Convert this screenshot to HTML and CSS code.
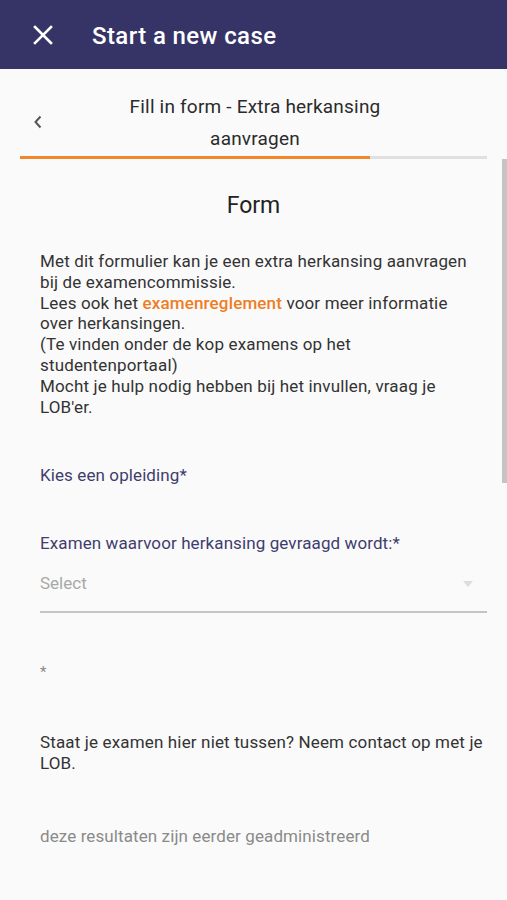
FILE: index.html
```html
<!DOCTYPE html>
<html>
<head>
<meta charset="utf-8">
<link rel="stylesheet" href="styles.css">
</head>
<body>
<header class="appbar">
  <svg class="close" width="20" height="20" viewBox="0 0 20 20"><path d="M2 2 L18 18 M18 2 L2 18" stroke="#fff" stroke-width="2.6" stroke-linecap="square"/></svg>
  <h1 class="title">Start a new case</h1>
</header>
<div class="page">
  <div class="stepper">
    <svg class="back" width="10" height="14" viewBox="0 0 10 14"><path d="M7.5 1.5 L2.5 7 L7.5 12.5" fill="none" stroke="#555" stroke-width="2"/></svg>
    <div class="step-title">Fill in form - Extra herkansing<br>aanvragen</div>
  </div>
  <div class="progress"><div class="progress-fill" style="width:75%"></div></div>
  <div class="scrollbar"></div>
  <main class="form">
    <h2 class="form-title">Form</h2>
    <p class="intro">Met dit formulier kan je een extra herkansing aanvragen bij de examencommissie.<br>Lees ook het <span class="link">examenreglement</span> voor meer informatie over herkansingen.<br>(Te vinden onder de kop examens op het studentenportaal)<br>Mocht je hulp nodig hebben bij het invullen, vraag je LOB'er.</p>
    <div class="label first">Kies een opleiding*</div>
    <div class="label second">Examen waarvoor herkansing gevraagd wordt:*</div>
    <div class="select">
      <span class="placeholder">Select</span>
      <span class="caret"></span>
    </div>
    <div class="star">*</div>
    <p class="note">Staat je examen hier niet tussen? Neem contact op met je LOB.</p>
    <p class="muted">deze resultaten zijn eerder geadministreerd</p>
  </main>
</div>
</body>
</html>
```
FILE: styles.css
```css
* { box-sizing: border-box; }
html, body { margin: 0; padding: 0; }
body {
  width: 507px;
  height: 900px;
  overflow: hidden;
  background: #fafafa;
  font-family: Roboto, "Noto Sans", sans-serif;
  color: #333;
}
.appbar {
  height: 69px;
  background: #363467;
  display: flex;
  align-items: center;
  padding-left: 33px;
}
.close { flex: none; margin-top: 1px; }
.title {
  margin: 0 0 0 39px;
  color: #fff;
  font-size: 24px;
  font-weight: 500;
  letter-spacing: 0.4px;
  margin-top: 2px;
}
.page { position: relative; }
.stepper {
  display: flex;
  align-items: center;
  padding: 19px 20px 0 33px;
  height: 86px;
}
.back { flex: none; margin-top: 1px; }
.step-title {
  flex: 1;
  text-align: center;
  font-size: 19px;
  line-height: 32px;
  color: #2b2b2b;
  padding-right: 20px;
  margin-top: 2px;
  letter-spacing: 0.2px;
}
.progress {
  margin: 1px 20px 0 20px;
  height: 3px;
  background: #e0e0e0;
}
.progress-fill { height: 3px; background: #f2862b; }
.scrollbar {
  position: absolute;
  right: 0;
  top: 90px;
  width: 5px;
  height: 324px;
  background: #c4c4c4;
}
.form { padding: 0 20px 0 40px; }
.form-title {
  margin: 32px 0 0 0;
  text-align: center;
  font-size: 23px;
  font-weight: 400;
  color: #222;
  padding-right: 20px;
  line-height: 30px;
}
.intro {
  margin: 30px 17px 0 0;
  font-size: 17px;
  line-height: 20.8px;
  color: #333;
  letter-spacing: 0.15px;
}
.link { color: #ef7d22; font-weight: 500; }
.label {
  color: #3f3d6e;
  font-size: 17px;
  line-height: 22px;
  letter-spacing: 0.1px;
}
.label.first { margin-top: 47px; }
.label.second { margin-top: 46px; }
.select {
  margin-top: 18px;
  height: 41px;
  border-bottom: 2px solid #c4c4c4;
  display: flex;
  align-items: flex-start;
  justify-content: space-between;
  padding-right: 14px;
}
.placeholder { color: #a8a8a8; font-size: 17px; line-height: 22px; }
.caret {
  margin-top: 9px;
  width: 0; height: 0;
  border-left: 5px solid transparent;
  border-right: 5px solid transparent;
  border-top: 6px solid #ddd;
}
.star {
  margin-top: 49px;
  color: #888;
  font-size: 15px;
  line-height: 20px;
}
.note {
  margin: 50px 0 0 0;
  font-size: 17px;
  line-height: 21px;
  color: #333;
  letter-spacing: 0.15px;
}
.muted {
  margin: 51px 0 0 0;
  font-size: 17px;
  line-height: 22px;
  color: #8a8a8a;
  letter-spacing: 0.1px;
}
```
